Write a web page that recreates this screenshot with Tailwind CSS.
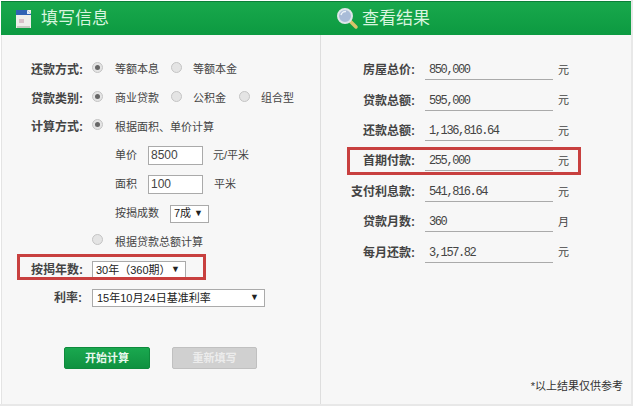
<!DOCTYPE html>
<html lang="zh">
<head>
<meta charset="utf-8">
<title>房贷计算器</title>
<script src="https://cdn.jsdelivr.net/npm/@tailwindcss/browser@4"></script>
</head>
<body class="bg-white">
<div class="relative w-[640px] h-[410px] overflow-hidden font-['Liberation_Sans','Noto_Sans_CJK_SC',sans-serif] text-[11px] text-[#444]">
    <div class="w-[633px] h-[406px] pt-px pl-px flex flex-col border-r-2 border-b-2 border-[#e8e8e8]">
        <!-- Header -->
        <div class="grid grid-cols-[320px_1fr] h-[34px] shrink-0 border-t border-[#0b7f38] bg-gradient-to-b from-[#18a84c] to-[#0c9a41] text-[#d8f5df] text-[17px]">
            <div class="flex items-center pl-[14px] gap-[9px]">
                <svg width="17" height="20" viewBox="0 0 17 20">
                    <rect x="1" y="1" width="15" height="18" fill="#eeeeea"/>
                    <path d="M1 1h11l4 4v1H1z" fill="#2f62b4"/>
                    <path d="M12 1l4 4h-4z" fill="#dfe8f5"/>
                    <rect x="4" y="10" width="5" height="4" fill="#d8c0c8"/>
                    <rect x="2" y="17" width="13" height="2" fill="#c9c9c2"/>
                </svg>
                <span>填写信息</span>
            </div>
            <div class="flex items-center pl-[15px] gap-[3px]">
                <svg width="23" height="23" viewBox="0 0 23 23">
                    <path d="M14 14l6 6" stroke="#d9c36a" stroke-width="3.500" stroke-linecap="round"/>
                    <circle cx="9" cy="9" r="7" fill="#a9bcd8" stroke="#dfe6ea" stroke-width="2"/>
                    <path d="M5 8a4.500 4.500 0 0 1 5-3.500" stroke="#eef3f8" stroke-width="1.500" fill="none"/>
                </svg>
                <span>查看结果</span>
            </div>
        </div>

        <div class="grid grid-cols-[319px_1fr] flex-1 bg-[#f7f7f7] border-l border-[#e4e4e4]">
            <!-- Form column -->
            <div class="border-r border-[#dedede] pt-[20px] flex flex-col">
                <div class="flex items-center h-[29px]">
                    <span class="w-[80px] pl-[29px] text-[12px] font-bold whitespace-nowrap">还款方式:</span>
                    <span class="ml-[10px] mb-[5px] w-[11px] h-[11px] rounded-full bg-[#e4e4e4] border border-[#c4c4c4] flex items-center justify-center"><span class="w-[5px] h-[5px] rounded-full bg-[#666]"></span></span>
                    <span class="ml-[12px] w-[44px] whitespace-nowrap">等额本息</span>
                    <span class="ml-[12px] mb-[5px] w-[11px] h-[11px] rounded-full bg-[#e4e4e4] border border-[#c4c4c4]"></span>
                    <span class="ml-[11px] whitespace-nowrap">等额本金</span>
                </div>
                <div class="flex items-center h-[29px]">
                    <span class="w-[80px] pl-[29px] text-[12px] font-bold whitespace-nowrap">贷款类别:</span>
                    <span class="ml-[10px] mb-[5px] w-[11px] h-[11px] rounded-full bg-[#e4e4e4] border border-[#c4c4c4] flex items-center justify-center"><span class="w-[5px] h-[5px] rounded-full bg-[#666]"></span></span>
                    <span class="ml-[12px] w-[44px] whitespace-nowrap">商业贷款</span>
                    <span class="ml-[12px] mb-[5px] w-[11px] h-[11px] rounded-full bg-[#e4e4e4] border border-[#c4c4c4]"></span>
                    <span class="ml-[11px] w-[33px] whitespace-nowrap">公积金</span>
                    <span class="ml-[13px] mb-[5px] w-[11px] h-[11px] rounded-full bg-[#e4e4e4] border border-[#c4c4c4]"></span>
                    <span class="ml-[11px] whitespace-nowrap">组合型</span>
                </div>
                <div class="flex items-center h-[28px]">
                    <span class="w-[80px] pl-[29px] text-[12px] font-bold whitespace-nowrap">计算方式:</span>
                    <span class="ml-[10px] mb-[5px] w-[11px] h-[11px] rounded-full bg-[#e4e4e4] border border-[#c4c4c4] flex items-center justify-center"><span class="w-[5px] h-[5px] rounded-full bg-[#666]"></span></span>
                    <span class="ml-[12px] whitespace-nowrap">根据面积、单价计算</span>
                </div>
                <div class="flex items-center h-[29px] pl-[113px]">
                    <span class="w-[33px]">单价</span>
                    <span class="w-[55px] h-[19px] leading-[17px] pl-[2px] text-[12px] bg-white border border-[#aaa]">8500</span>
                    <span class="ml-[10px]">元/平米</span>
                </div>
                <div class="flex items-center h-[29px] pl-[113px]">
                    <span class="w-[33px]">面积</span>
                    <span class="w-[55px] h-[19px] leading-[17px] pl-[2px] text-[12px] bg-white border border-[#aaa]">100</span>
                    <span class="ml-[11px]">平米</span>
                </div>
                <div class="flex items-center h-[29px] pl-[113px]">
                    <span class="w-[55px] whitespace-nowrap">按揭成数</span>
                    <span class="w-[39px] h-[18px] pl-[3px] pr-[5px] bg-white border border-[#aaa] flex justify-between items-center text-[#222]">7成<span class="text-[9px]">▼</span></span>
                </div>
                <div class="flex items-center h-[28px] pl-[90px]">
                    <span class="mb-[5px] w-[11px] h-[11px] rounded-full bg-[#e4e4e4] border border-[#c4c4c4]"></span>
                    <span class="ml-[12px] whitespace-nowrap">根据贷款总额计算</span>
                </div>
                <div class="flex items-center h-[28px]">
                    <span class="w-[80px] pl-[29px] text-[12px] font-bold whitespace-nowrap">按揭年数:</span>
                    <span class="ml-[10px] w-[94px] h-[18px] pl-[3px] pr-[5px] bg-white border border-[#aaa] flex justify-between items-center text-[#222] whitespace-nowrap">30年&#65288;360期&#65289;<span class="text-[9px]">▼</span></span>
                </div>
                <div class="flex items-center h-[28px]">
                    <span class="w-[80px] pl-[52px] text-[12px] font-bold whitespace-nowrap">利率:</span>
                    <span class="ml-[10px] w-[173px] h-[18px] pl-[4px] pr-[5px] bg-white border border-[#aaa] flex justify-between items-center text-[#222] whitespace-nowrap">15年10月24日基准利率<span class="text-[9px]">▼</span></span>
                </div>
                <div class="flex pl-[62px] gap-[22px] mt-[35px]">
                    <span class="w-[86px] h-[22px] rounded-[2px] bg-gradient-to-b from-[#1aa84f] to-[#0f9140] border border-[#0e8a3c] text-[#e9f8ee] font-bold flex items-center justify-center">开始计算</span>
                    <span class="w-[85px] h-[22px] rounded-[2px] bg-[#d0d0d0] border border-[#c0c0c0] text-[#ececec] font-bold flex items-center justify-center">重新填写</span>
                </div>
            </div>

            <!-- Result column -->
            <div class="relative pt-[20px] flex flex-col">
                <div class="flex items-center h-[30.400px]">
                    <span class="w-[94px] text-right text-[12px] font-bold">房屋总价:</span>
                    <span class="ml-[10px] w-[128px] h-[20px] leading-[21px] pl-[4px] border-b border-[#aaa] font-['Liberation_Mono',monospace] text-[12px] tracking-[-1.400px]">850,000</span>
                    <span class="ml-[5px]">元</span>
                </div>
                <div class="flex items-center h-[30.400px]">
                    <span class="w-[94px] text-right text-[12px] font-bold">贷款总额:</span>
                    <span class="ml-[10px] w-[128px] h-[20px] leading-[21px] pl-[4px] border-b border-[#aaa] font-['Liberation_Mono',monospace] text-[12px] tracking-[-1.400px]">595,000</span>
                    <span class="ml-[5px]">元</span>
                </div>
                <div class="flex items-center h-[30.400px]">
                    <span class="w-[94px] text-right text-[12px] font-bold">还款总额:</span>
                    <span class="ml-[10px] w-[128px] h-[20px] leading-[21px] pl-[4px] border-b border-[#aaa] font-['Liberation_Mono',monospace] text-[12px] tracking-[-1.400px]">1,136,816.64</span>
                    <span class="ml-[5px]">元</span>
                </div>
                <div class="flex items-center h-[30.400px]">
                    <span class="w-[94px] text-right text-[12px] font-bold">首期付款:</span>
                    <span class="ml-[10px] w-[128px] h-[20px] leading-[21px] pl-[4px] border-b border-[#aaa] font-['Liberation_Mono',monospace] text-[12px] tracking-[-1.400px]">255,000</span>
                    <span class="ml-[5px]">元</span>
                </div>
                <div class="flex items-center h-[30.400px]">
                    <span class="w-[94px] text-right text-[12px] font-bold whitespace-nowrap">支付利息款:</span>
                    <span class="ml-[10px] w-[128px] h-[20px] leading-[21px] pl-[4px] border-b border-[#aaa] font-['Liberation_Mono',monospace] text-[12px] tracking-[-1.400px]">541,816.64</span>
                    <span class="ml-[5px]">元</span>
                </div>
                <div class="flex items-center h-[30.400px]">
                    <span class="w-[94px] text-right text-[12px] font-bold">贷款月数:</span>
                    <span class="ml-[10px] w-[128px] h-[20px] leading-[21px] pl-[4px] border-b border-[#aaa] font-['Liberation_Mono',monospace] text-[12px] tracking-[-1.400px]">360</span>
                    <span class="ml-[5px]">月</span>
                </div>
                <div class="flex items-center h-[30.400px]">
                    <span class="w-[94px] text-right text-[12px] font-bold">每月还款:</span>
                    <span class="ml-[10px] w-[128px] h-[20px] leading-[21px] pl-[4px] border-b border-[#aaa] font-['Liberation_Mono',monospace] text-[12px] tracking-[-1.400px]">3,157.82</span>
                    <span class="ml-[5px]">元</span>
                </div>
                <span class="absolute right-[8px] bottom-[10px] text-[#333]">*以上结果仅供参考</span>
            </div>
        </div>
    </div>

    <!-- Red highlight boxes drawn over the screenshot -->
    <div class="absolute left-[17px] top-[254px] w-[189px] h-[26px] border-[3px] border-[#c8403f]"></div>
    <div class="absolute left-[347px] top-[147px] w-[234px] h-[28px] border-[3px] border-[#c8403f]"></div>
</div>
</body>
</html>
